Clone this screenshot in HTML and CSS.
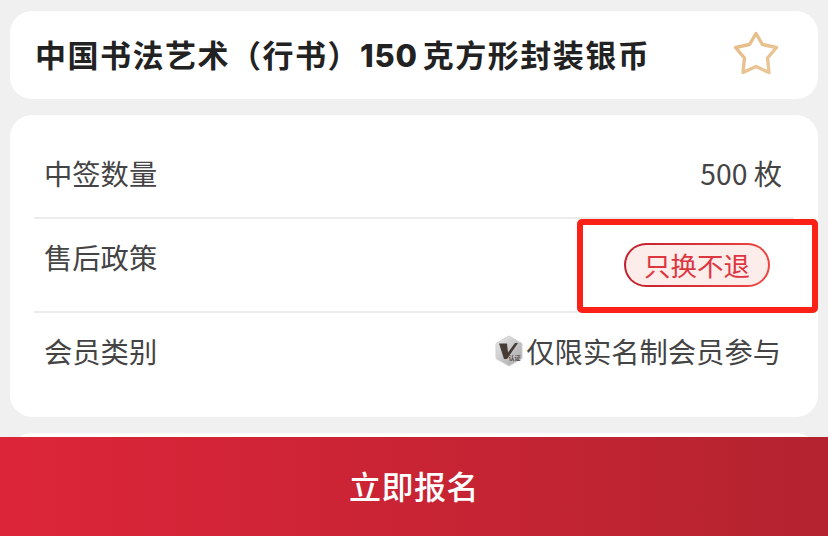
FILE: index.html
```html
<!DOCTYPE html>
<html lang="zh">
<head>
<meta charset="utf-8">
<title>中国书法艺术（行书）150 克方形封装银币</title>
<link rel="stylesheet" href="styles.css">
</head>
<body>
<main class="page">
  <section class="card title-card">
    <h1 class="title">中国书法艺术（行书）<span class="num">150</span> 克方形封装银币</h1>
    <svg class="star" width="50" height="50" viewBox="0 0 50 50" aria-hidden="true">
      <defs>
        <linearGradient id="starGrad" x1="0" y1="0" x2="1" y2="1">
          <stop offset="0" stop-color="#e6bb85"/>
          <stop offset="1" stop-color="#ebc79a"/>
        </linearGradient>
      </defs>
      <path d="M25 5.5 L31.5 16.5 L45.5 19.5 L36.5 30 L38 44.5 L25 38.5 L12 44.5 L13.5 30 L4.5 19.5 L18.5 16.5 Z" fill="none" stroke="url(#starGrad)" stroke-width="3.4" stroke-linejoin="round"/>
    </svg>
  </section>
  <section class="card info-card">
    <div class="row row-first">
      <span class="label">中签数量</span>
      <span class="value">500 枚</span>
    </div>
    <div class="row row-policy">
      <span class="label">售后政策</span>
      <span class="tag">只换不退</span>
    </div>
    <div class="row row-last">
      <span class="label">会员类别</span>
      <span class="value member">
        <svg class="badge" width="32" height="34" viewBox="0 0 32 34" aria-hidden="true">
          <defs>
            <linearGradient id="hexGrad" x1="0" y1="0" x2="1" y2="1">
              <stop offset="0" stop-color="#ececec"/>
              <stop offset="1" stop-color="#a4a4a4"/>
            </linearGradient>
          </defs>
          <path d="M16 2 L29 9.5 L29 24.5 L16 32 L3 24.5 L3 9.5 Z" fill="url(#hexGrad)" stroke="#cfcfcf" stroke-width="1"/>
          <path d="M6 9.5 L14 9.5 L15 18.5 L22 9 L25 9 L14 25 L11 25 Z" fill="#463c36"/>
          <text class="badge-text" x="15.5" y="25.5">认证</text>
        </svg>仅限实名制会员参与</span>
    </div>
  </section>
  <section class="card next-card"></section>
</main>
<div class="highlight"></div>
<footer class="cta">立即报名</footer>
</body>
</html>
```
FILE: styles.css
```css
* { box-sizing: border-box; }
html, body { margin: 0; height: 100%; }
body {
  background: #f0f0f0;
  font-family: "Noto Sans CJK SC", "Liberation Sans", sans-serif;
  overflow: hidden;
  position: relative;
  color: #333;
}
.page {
  display: flex;
  flex-direction: column;
  gap: 16px;
  padding: 11px 10px 0;
}
.card { background: #fff; border-radius: 22px; }
.title-card {
  height: 88px;
  display: flex;
  align-items: center;
  justify-content: space-between;
  padding: 0 37px 0 25px;
}
.title {
  margin: 0;
  font-size: 31px;
  line-height: 1.2;
  font-weight: 700;
  color: #222;
  letter-spacing: 1.5px;
  word-spacing: -3.5px;
  white-space: nowrap;
}
.num { font-family: "Inter", "Liberation Sans", sans-serif; letter-spacing: 0.8px; font-weight: 800; }
.star { display: block; margin-bottom: 4px; flex: none; }
.info-card {
  height: 302px;
  padding: 0 24px;
}
.row {
  display: flex;
  justify-content: space-between;
  border-bottom: 2px solid #ececec;
  font-size: 28.3px;
  line-height: 40px;
  padding: 0 12px 0 10px;
  color: #444;
}
.row-first { height: 104px; padding-top: 38px; }
.row-policy { height: 94px; padding-top: 18px; }
.row-last { border-bottom: 0; padding-top: 18px; padding-left: 10px; }
.label, .value { display: block; }
.member { display: flex; align-items: center; margin-right: 1px; }
.badge { margin-right: 1px; flex: none; }
.badge-text { font-size: 6px; fill: #5a514b; font-weight: 700; }
.tag {
  align-self: flex-start;
  margin-top: 6px;
  margin-right: 12px;
  height: 44px;
  padding: 0 18px;
  border-radius: 22px;
  border: 2px solid transparent;
  background:
    linear-gradient(#fcecea, #fcecea) padding-box,
    linear-gradient(90deg, #c0202f, #ef4540) border-box;
  color: #dc3640;
  font-size: 26.5px;
  line-height: 40px;
}
.next-card { height: 80px; }
.highlight {
  position: absolute;
  left: 577px;
  top: 219px;
  width: 241px;
  height: 94px;
  border: 6px solid #fb2116;
  border-radius: 5px;
}
.cta {
  position: absolute;
  left: 0;
  right: 0;
  top: 437px;
  height: 99px;
  background: linear-gradient(90deg, #dd2539, #b4232f);
  color: #fff;
  font-size: 32px;
  font-weight: 500;
  letter-spacing: 0.5px;
  text-align: center;
  line-height: 97px;
}
```
